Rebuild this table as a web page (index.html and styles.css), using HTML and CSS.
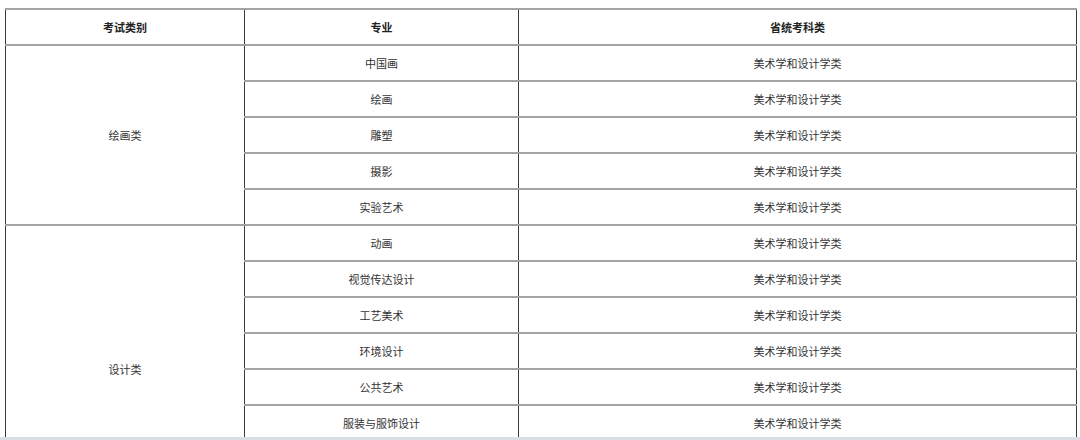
FILE: index.html
```html
<!DOCTYPE html>
<html lang="zh-CN">
<head>
<meta charset="utf-8">
<link rel="stylesheet" href="styles.css">
</head>
<body>
<div class="page">
<table class="grid">
  <colgroup><col class="c1"><col class="c2"><col class="c3"></colgroup>
  <thead>
    <tr><th>考试类别</th><th>专业</th><th>省统考科类</th></tr>
  </thead>
  <tbody>
    <tr><td rowspan="5">绘画类</td><td>中国画</td><td>美术学和设计学类</td></tr>
    <tr><td>绘画</td><td>美术学和设计学类</td></tr>
    <tr><td>雕塑</td><td>美术学和设计学类</td></tr>
    <tr><td>摄影</td><td>美术学和设计学类</td></tr>
    <tr><td>实验艺术</td><td>美术学和设计学类</td></tr>
    <tr><td rowspan="8">设计类</td><td>动画</td><td>美术学和设计学类</td></tr>
    <tr><td>视觉传达设计</td><td>美术学和设计学类</td></tr>
    <tr><td>工艺美术</td><td>美术学和设计学类</td></tr>
    <tr><td>环境设计</td><td>美术学和设计学类</td></tr>
    <tr><td>公共艺术</td><td>美术学和设计学类</td></tr>
    <tr><td>服装与服饰设计</td><td>美术学和设计学类</td></tr>
    <tr><td>产品设计</td><td>美术学和设计学类</td></tr>
    <tr><td>数字媒体艺术</td><td>美术学和设计学类</td></tr>
  </tbody>
</table>
</div>
<div class="bottom-bar"></div>
</body>
</html>
```
FILE: styles.css
```css
html, body {
  margin: 0;
  padding: 0;
  background: #ffffff;
  overflow: hidden;
  height: 440px;
}
.page {
  padding: 8px 4px 0 5px;
}
.grid {
  border-collapse: collapse;
  width: 1071px;
  table-layout: fixed;
  font-family: "Noto Sans CJK SC", "Microsoft YaHei", sans-serif;
  font-size: 11px;
  color: #333333;
}
.c1 { width: 239px; }
.c2 { width: 274px; }
.c3 { width: 558px; }
.grid th,
.grid td {
  height: 34px;
  padding: 0;
  text-align: center;
  vertical-align: middle;
  border-top: 2px solid #a3a3a3;
  border-bottom: 2px solid #a3a3a3;
  border-left: 1px solid #3a3a3a;
  border-right: 1px solid #3a3a3a;
}
.grid th {
  font-weight: bold;
  color: #222222;
}
.bottom-bar {
  position: fixed;
  left: 0;
  right: 0;
  bottom: 0;
  height: 3px;
  background: #d9dee4;
}
```
